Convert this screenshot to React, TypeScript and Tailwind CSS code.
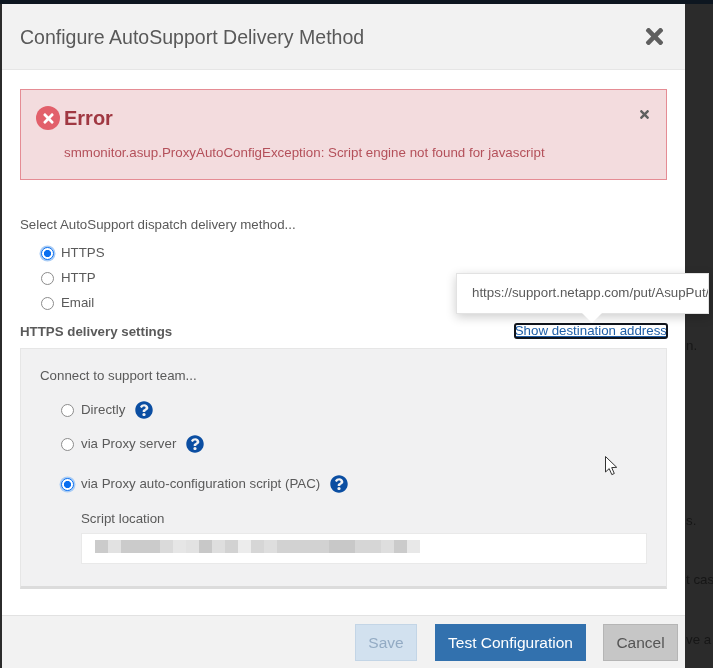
import { FaQuestionCircle, FaTimes } from "react-icons/fa";

const blocks = [
  "bg-[#cbcbcb]", "bg-[#e2e2e2]", "bg-[#cbcbcb]", "bg-[#cbcbcb]", "bg-[#cbcbcb]",
  "bg-[#dadada]", "bg-[#e6e6e6]", "bg-[#e2e2e2]", "bg-[#c8c8c8]", "bg-[#dedede]",
  "bg-[#d2d2d2]", "bg-[#ececec]", "bg-[#d6d6d6]", "bg-[#dedede]", "bg-[#d2d2d2]",
  "bg-[#d2d2d2]", "bg-[#d2d2d2]", "bg-[#d2d2d2]", "bg-[#c8c8c8]", "bg-[#c8c8c8]",
  "bg-[#d6d6d6]", "bg-[#d6d6d6]", "bg-[#dedede]", "bg-[#cbcbcb]", "bg-[#e8e8e8]",
];

function Help() {
  return <FaQuestionCircle size={18} className="shrink-0 text-[#0b4ea2]" />;
}

function Radio({ name, label, checked }: { name: string; label: string; checked?: boolean }) {
  return (
    <label className="flex items-center gap-[7px]">
      <input
        type="radio"
        name={name}
        defaultChecked={checked}
        className="appearance-none w-[13px] h-[13px] m-0 rounded-full border border-[#8c8c8c] bg-white checked:border-[#0a6ff0] checked:bg-[radial-gradient(circle,#0a6ff0_42%,#ffffff_50%)] checked:shadow-[0_0_0_1.5px_#a9ccf5]"
      />
      <span>{label}</span>
    </label>
  );
}

export default function App() {
  return (
    <div className="relative w-[713px] h-[668px] overflow-hidden bg-[#2b2b2b] font-['Liberation_Sans',Arial,sans-serif] text-[13.3px] leading-[20px] text-[#5a5a5a] blur-[0.5px]">
      <div className="h-[4px] bg-[#0d1620]" />

      {/* dimmed page behind the dialog */}
      <span className="absolute left-[686px] top-[336px] whitespace-nowrap text-[#161616]">n.</span>
      <span className="absolute left-[686px] top-[511px] whitespace-nowrap text-[#161616]">s.</span>
      <span className="absolute left-[686px] top-[570px] whitespace-nowrap text-[#161616]">t cas</span>
      <span className="absolute left-[686px] top-[630px] whitespace-nowrap text-[#161616]">ve a</span>

      <div className="ml-[2px] w-[683px] h-[664px] bg-white flex flex-col">
        <div className="h-[66px] shrink-0 bg-[#f2f2f2] border-b border-[#e6e6e6] flex items-center justify-between pl-[18px] pr-[18px]">
          <h1 className="text-[19.55px] leading-[28px] font-normal text-[#595959]">Configure AutoSupport Delivery Method</h1>
          <FaTimes size={25} className="text-[#5f5f5f]" />
        </div>

        <div className="flex-1 px-[18px] pt-[19px]">
          <div className="relative h-[91px] bg-[#f3dcde] border border-[#e58c94] pl-[15px] pt-[15px]">
            <div className="flex items-center gap-[4px]">
              <span className="w-[24px] h-[24px] rounded-full bg-[#e2606b] flex items-center justify-center">
                <FaTimes size={15} className="text-white" />
              </span>
              <span className="text-[20px] leading-[26px] font-bold text-[#a03842]">Error</span>
            </div>
            <p className="ml-[28px] mt-[13px] text-[13.35px] leading-[18px] text-[#b4505a]">
              smmonitor.asup.ProxyAutoConfigException: Script engine not found for javascript
            </p>
            <FaTimes size={13} className="absolute right-[15px] top-[18px] text-[#5f5f5f]" />
          </div>

          <p className="mt-[35px]">Select AutoSupport dispatch delivery method...</p>
          <div className="mt-[8px] ml-[21px] flex flex-col gap-[5px]">
            <Radio name="method" label="HTTPS" checked />
            <Radio name="method" label="HTTP" />
            <Radio name="method" label="Email" />
          </div>

          <div className="mt-[9px] flex items-end justify-between h-[20px]">
            <span className="font-bold">HTTPS delivery settings</span>
            <a className="mb-[4px] text-[#1f5fa8] underline outline-2 -outline-offset-1 outline-[#10141c] rounded-[2px] leading-[14px]">Show destination address</a>
          </div>

          <div className="mt-[6px] h-[241px] bg-[#f1f1f2] border border-[#e6e6e6] border-b-[3px] border-b-[#dcdcdc] pl-[19px] pt-[17px]">
            <p>Connect to support team...</p>
            <div className="mt-[14px] ml-[21px]">
              <div className="flex items-center gap-[10px] h-[20px]">
                <Radio name="connect" label="Directly" />
                <Help />
              </div>
              <div className="mt-[14px] flex items-center gap-[10px] h-[20px]">
                <Radio name="connect" label="via Proxy server" />
                <Help />
              </div>
              <div className="mt-[20px] flex items-center gap-[10px] h-[20px]">
                <Radio name="connect" label="via Proxy auto-configuration script (PAC)" checked />
                <Help />
              </div>
              <p className="mt-[15px] ml-[20px]">Script location</p>
              <div className="mt-[4px] ml-[20px] w-[566px] h-[31px] bg-white border border-[#e9e9e9] pl-[13px] pt-[6px]">
                <div className="flex">
                  {blocks.map((c, i) => (
                    <span key={i} className={`w-[13px] h-[13px] ${c}`} />
                  ))}
                </div>
              </div>
            </div>
          </div>
        </div>

        <div className="h-[53px] shrink-0 bg-[#f2f2f2] border-t border-[#e2e2e2] flex items-start justify-end pt-[8px] pr-[7px]">
          <button className="w-[62px] h-[37px] bg-[#d2e1ef] border border-[#c3d5e6] text-[15.5px] text-[#93abc4]">Save</button>
          <button className="ml-[18px] w-[151px] h-[37px] bg-[#3271ae] text-[15.5px] text-white">Test Configuration</button>
          <button className="ml-[17px] w-[75px] h-[37px] bg-[#c6c6c6] border border-[#b5b5b5] text-[15.5px] text-[#555]">Cancel</button>
        </div>
      </div>

      {/* destination tooltip */}
      <div className="absolute left-[456px] top-[273px] w-[253px] h-[41px] bg-white border border-[#e2e2e2] shadow-[0_3px_10px_rgba(0,0,0,0.2)] pl-[15px] pt-[9px] whitespace-nowrap overflow-hidden text-[#5a5a5a]">
        https://support.netapp.com/put/AsupPut/
      </div>
      <div className="absolute left-[582px] top-[313px] w-0 h-0 border-x-[10px] border-x-transparent border-t-[10px] border-t-white" />

      {/* mouse pointer */}
      <svg viewBox="0 0 14 22" className="absolute left-[604px] top-[455px] w-[14px] h-[22px]">
        <path d="M1.5 1.5v15.5l3.7-3.4 2.6 6 2.5-1.1-2.6-5.9 5-.3z" fill="#fff" stroke="#333" strokeWidth="1" />
      </svg>
    </div>
  );
}
